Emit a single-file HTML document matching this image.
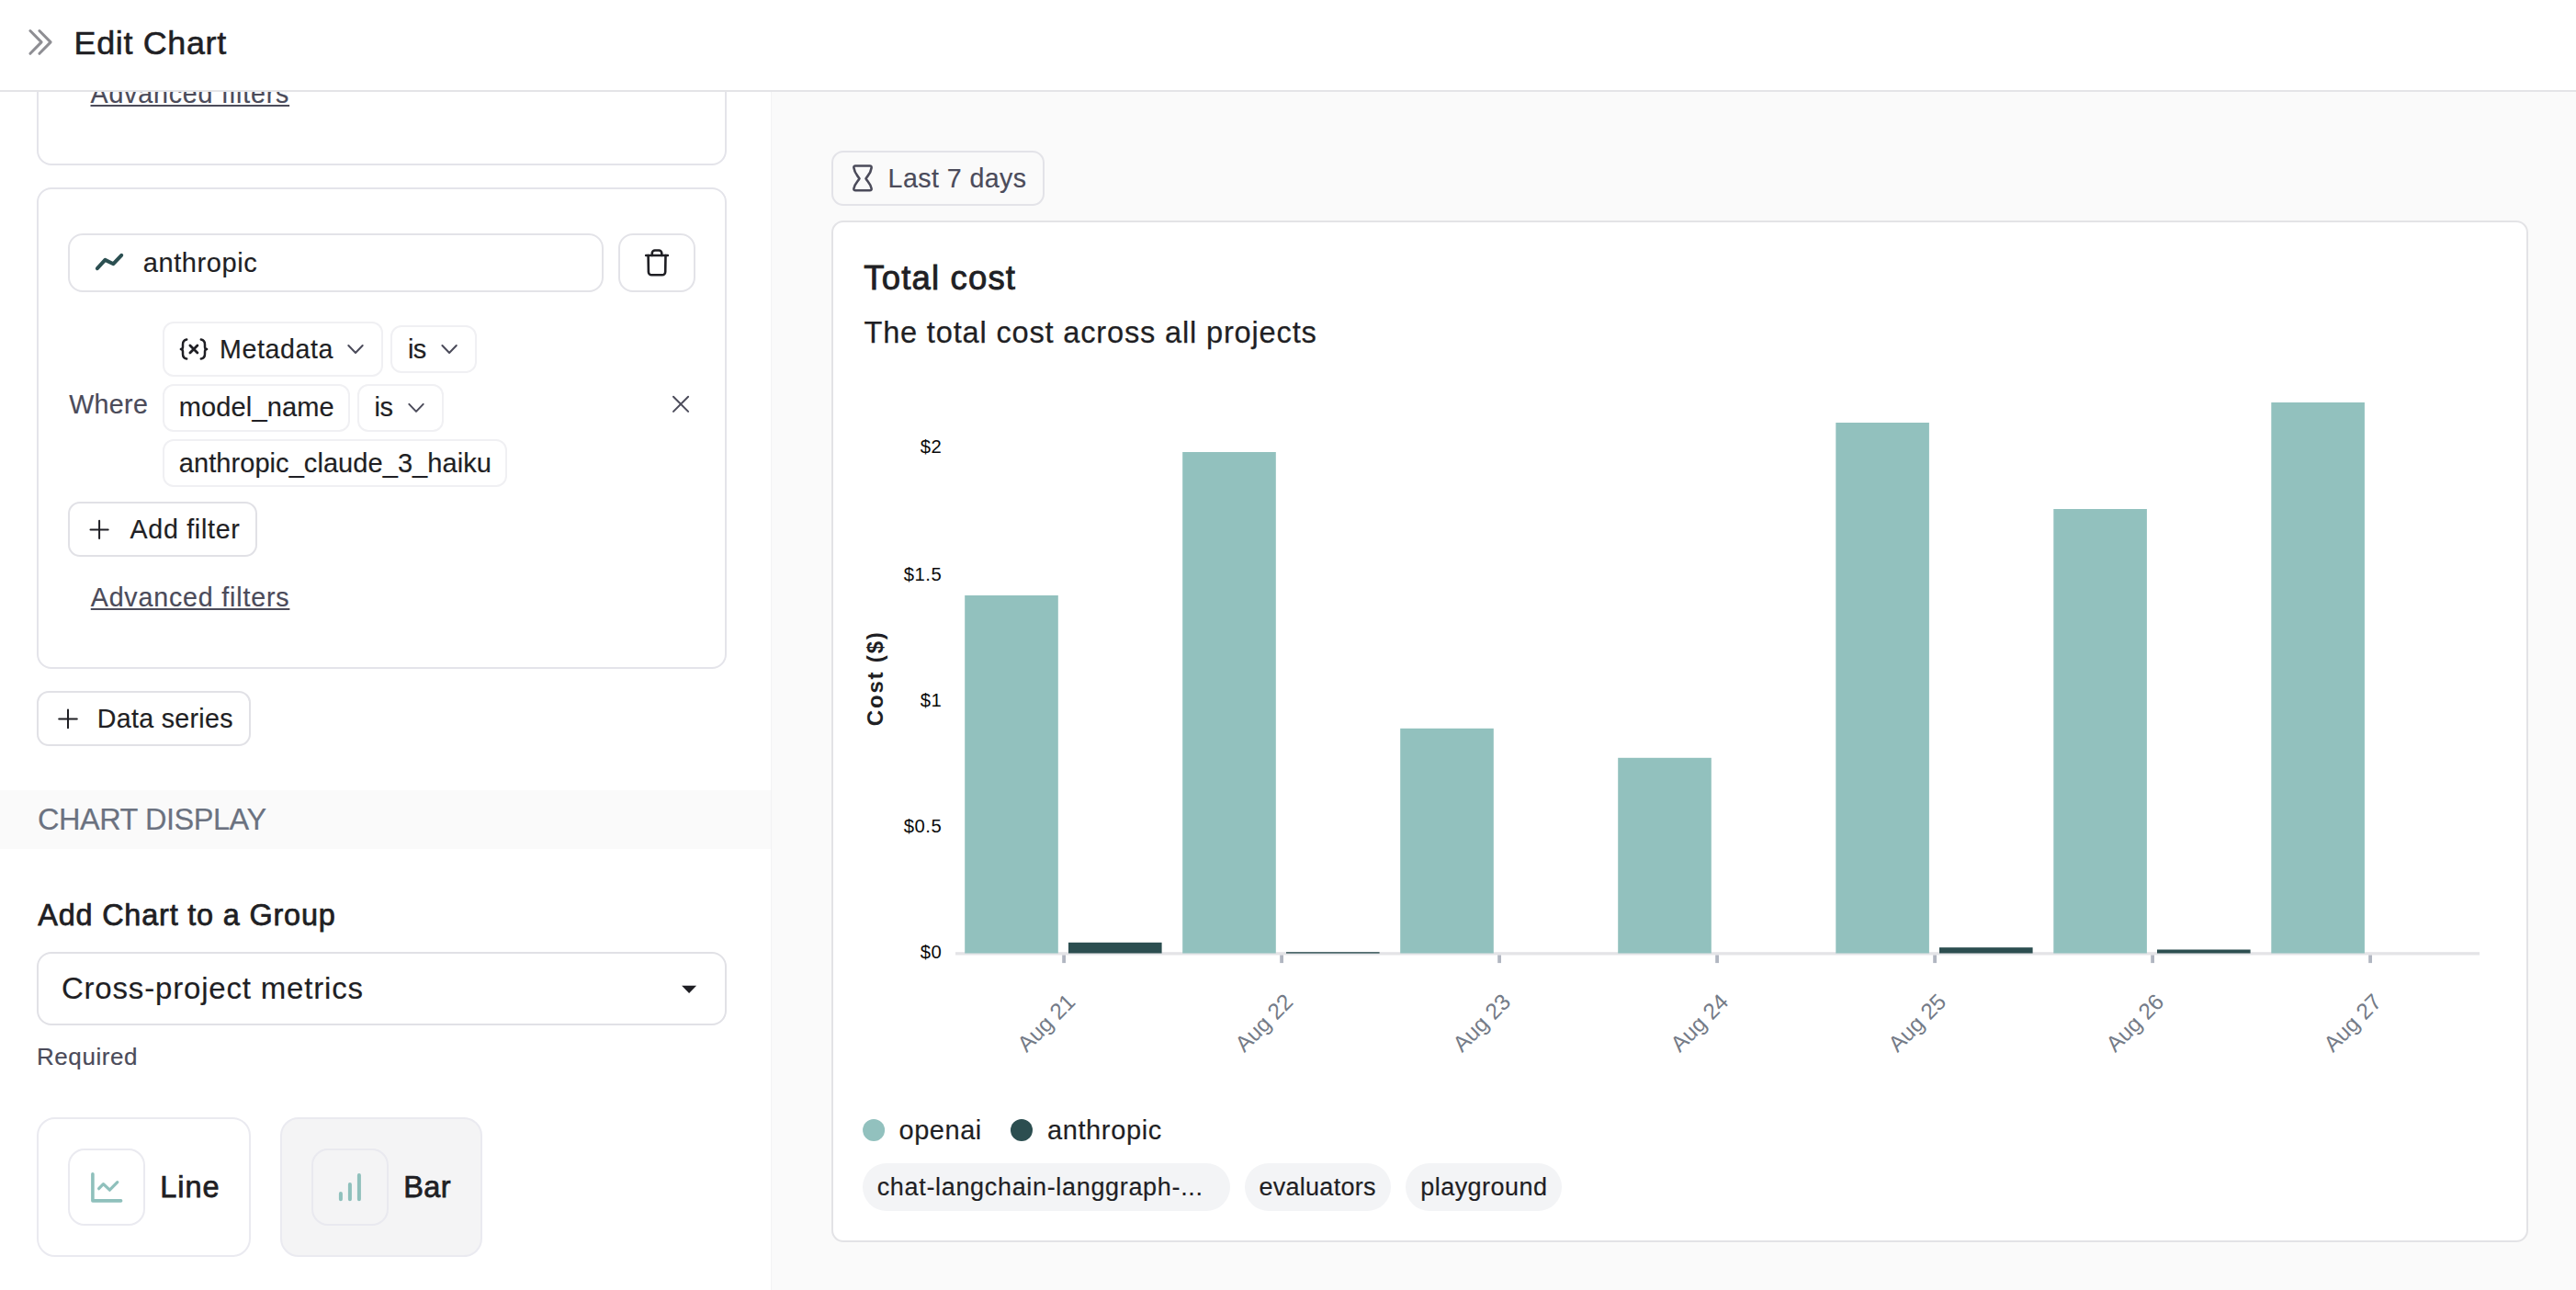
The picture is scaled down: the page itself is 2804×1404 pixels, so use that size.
<!DOCTYPE html>
<html lang="en">
<head>
<meta charset="utf-8">
<title>Edit Chart</title>
<style>
  html, body { margin: 0; padding: 0; }
  body { width: 2804px; height: 1404px; position: relative; overflow: hidden; background: #ffffff;
         font-family: "Liberation Sans", Arial, Helvetica, sans-serif; color: #1f1f24; }
  * { box-sizing: border-box; }
  .abs { position: absolute; }
  .tx { position: absolute; white-space: nowrap; line-height: 1; display: block; }
  .bm { display: inline-block; width: 0; height: 0; }
  header { position: absolute; left: 0; top: 0; width: 2804px; height: 100px; background: #fff;
           border-bottom: 2px solid #e4e4e7; z-index: 10; }
  #left { position: absolute; left: 0; top: 0; width: 839px; height: 1404px; background: #fff; overflow: hidden; }
  #right { position: absolute; left: 839px; top: 0; width: 1965px; height: 1404px; background: #fafafa;
           border-left: 1px solid #f3f3f4; }
  #rightc { position: absolute; left: 0; top: 0; width: 2804px; height: 1404px; }
  .card { position: absolute; border: 2px solid #e4e4ea; border-radius: 16px; background: #fff; }
  .field { position: absolute; border: 2px solid #e3e3e8; border-radius: 16px; background: #fff; }
  .sel { position: absolute; border: 2px solid #f0f0f3; border-radius: 12px; background: #fff; }
  .btn { position: absolute; border: 2px solid #e1e1e6; border-radius: 13px; background: #fff; }
  .chip { position: absolute; top: 1266px; height: 52px; border-radius: 26px; background: #f3f4f6; }
  button { font: inherit; color: inherit; padding: 0; margin: 0; text-align: left; }
  svg { position: absolute; overflow: visible; }
</style>
</head>
<body>

<!-- ================= LEFT PANEL ================= -->
<aside id="left">
  <!-- previous series card (scrolled, clipped by header) -->
  <section class="card" style="left:40px;top:-60px;width:751px;height:240px;"><span class="tx" id="t_adv1" style="left:56.50px;top:146.00px;font-size:28.6px;font-weight:400;color:#4b4b5a;letter-spacing:0.824px;text-decoration:underline;text-decoration-thickness:2px;text-underline-offset:1.5px;-webkit-text-stroke:0.18px #4b4b5a;">Advanced filters</span></section>

  <!-- anthropic series card -->
  <section class="card" style="left:40px;top:204px;width:751px;height:524px;"></section>
  <div class="field" style="left:74px;top:254px;width:583px;height:64px;"><span class="tx" id="t_anth" style="left:79.80px;top:15.81px;font-size:29px;font-weight:400;color:#1f1f24;letter-spacing:0.581px;-webkit-text-stroke:0.18px #1f1f24;">anthropic</span></div>
  <button class="field" style="left:673px;top:254px;width:84px;height:64px;padding:0;"></button>

  <div class="sel" style="left:177px;top:350px;width:240px;height:60px;"><span class="tx" id="t_meta" style="left:60.00px;top:13.50px;font-size:28.6px;font-weight:400;color:#1f1f24;letter-spacing:0.598px;-webkit-text-stroke:0.18px #1f1f24;">Metadata</span></div>
  <div class="sel" style="left:425px;top:354px;width:94px;height:52px;"><span class="tx" id="t_is1" style="left:17.00px;top:9.51px;font-size:29px;font-weight:400;color:#1f1f24;letter-spacing:-0.693px;-webkit-text-stroke:0.18px #1f1f24;">is</span></div>
  <div class="sel" style="left:177px;top:418px;width:204px;height:52px;"><span class="tx" id="t_model" style="left:15.75px;top:9.31px;font-size:29px;font-weight:400;color:#1f1f24;letter-spacing:0.136px;-webkit-text-stroke:0.18px #1f1f24;">model_name</span></div>
  <div class="sel" style="left:389px;top:418px;width:94px;height:52px;"><span class="tx" id="t_is2" style="left:16.50px;top:9.31px;font-size:29px;font-weight:400;color:#1f1f24;letter-spacing:-0.443px;-webkit-text-stroke:0.18px #1f1f24;">is</span></div>
  <div class="sel" style="left:177px;top:478px;width:375px;height:52px;"><span class="tx" id="t_haiku" style="left:15.75px;top:9.61px;font-size:29px;font-weight:400;color:#1f1f24;letter-spacing:0.067px;-webkit-text-stroke:0.18px #1f1f24;">anthropic_claude_3_haiku</span></div>

  <button class="btn" style="left:74px;top:546px;width:206px;height:60px;"><span class="tx" id="t_addf" style="left:65.50px;top:13.81px;font-size:28.6px;font-weight:400;color:#1f1f24;letter-spacing:0.715px;-webkit-text-stroke:0.18px #1f1f24;">Add filter</span></button>
  <button class="btn" style="left:40px;top:752px;width:233px;height:60px;"><span class="tx" id="t_data" style="left:63.71px;top:14.00px;font-size:28.6px;font-weight:400;color:#1f1f24;letter-spacing:0.323px;-webkit-text-stroke:0.18px #1f1f24;">Data series</span></button>

  <!-- section band -->
  <h3 class="abs" style="left:0;top:860px;width:839px;height:64px;background:#fafafa;margin:0;font-weight:400;"><span class="tx" id="t_cd" style="left:40.91px;top:15.91px;font-size:32.5px;font-weight:400;color:#6b7280;letter-spacing:-0.456px;-webkit-text-stroke:0.18px #6b7280;">CHART DISPLAY</span></h3>

  <!-- group select -->
  <div class="field" style="left:40px;top:1036px;width:751px;height:80px;border-color:#e1e1e6;"><span class="tx" id="t_cross" style="left:24.91px;top:20.91px;font-size:33px;font-weight:400;color:#1f1f24;letter-spacing:0.819px;-webkit-text-stroke:0.18px #1f1f24;">Cross-project metrics</span></div>

  <!-- chart type cards -->
  <div class="card" style="left:40px;top:1216px;width:233px;height:152px;border-radius:20px;border-color:#eaeaf0;"><span class="tx" id="t_line" style="left:132.21px;top:58.00px;font-size:32.5px;font-weight:400;color:#1f1f24;letter-spacing:0.977px;-webkit-text-stroke:0.75px #1f1f24;">Line</span></div>
  <div class="card" style="left:74px;top:1250px;width:84px;height:84px;border-radius:18px;border-color:#eaeaf0;"></div>
  <div class="card" style="left:305px;top:1216px;width:220px;height:152px;border-radius:20px;border-color:#eaeaf0;background:#f4f4f5;"><span class="tx" id="t_bar" style="left:132.21px;top:58.00px;font-size:32.5px;font-weight:400;color:#1f1f24;letter-spacing:0.399px;-webkit-text-stroke:0.75px #1f1f24;">Bar</span></div>
  <div class="card" style="left:339px;top:1250px;width:84px;height:84px;border-radius:18px;border-color:#e9e9ef;background:#f4f4f5;"></div>

  <!-- icons (page coordinates) -->
  <svg width="839" height="1404" viewBox="0 0 839 1404" style="left:0;top:0;" fill="none" stroke-linecap="round" stroke-linejoin="round">
    <!-- trend icon -->
    <path d="M105.9 292.2 L114.4 282.9 L123.4 287.2 L132.2 277.8" stroke="#2b4f51" stroke-width="4"/>
    <!-- trash -->
    <g stroke="#1f1f24" stroke-width="2.6">
      <path d="M703.2 278 H726.9"/>
      <path d="M709.8 278 V275.6 a3.1 3.1 0 0 1 3.1 -3.1 h4.3 a3.1 3.1 0 0 1 3.1 3.1 V278"/>
      <path d="M705.6 278 L705.9 296 a3.3 3.3 0 0 0 3.3 3.3 h11.7 a3.3 3.3 0 0 0 3.3 -3.3 L724.5 278"/>
    </g>
    <!-- {x} variable icon -->
    <g stroke="#1f1f24" stroke-width="2.5">
      <path d="M203.2 369.6 C200.2 370.2 199 372 199 375 V377.4 C199 379 198.4 380 196.9 380.1 C198.4 380.2 199 381.2 199 382.8 V385.2 C199 388.2 200.2 390 203.2 390.6"/>
      <path d="M218.8 369.6 C221.8 370.2 223 372 223 375 V377.4 C223 379 223.6 380 225.1 380.1 C223.6 380.2 223 381.2 223 382.8 V385.2 C223 388.2 221.8 390 218.8 390.6"/>
      <path d="M206.9 376 L214.9 384 M214.9 376 L206.9 384" stroke-width="2.8"/>
    </g>
    <!-- chevrons -->
    <g stroke="#4b4b5a" stroke-width="2">
      <path d="M379.3 376 L387 384 L394.7 376"/>
      <path d="M481.4 376 L489.1 384 L496.8 376"/>
      <path d="M445.3 439.9 L453 447.9 L460.7 439.9"/>
      <!-- remove X -->
      <path d="M733 431.8 L749.1 447.9 M749.1 431.8 L733 447.9"/>
    </g>
    <!-- plus icons -->
    <g stroke="#1f1f24" stroke-width="2">
      <path d="M98.5 576.4 H117.7 M108.1 566.8 V586"/>
      <path d="M64.2 782.4 H83.8 M74 772.6 V792.2"/>
    </g>
    <!-- select caret -->
    <path d="M742.1 1072.8 H758.1 L750.1 1081 Z" fill="#1f1f24" stroke="none"/>
    <!-- line icon -->
    <g stroke="#8fc0bc">
      <path d="M100.9 1277.8 V1306.9 H131.6" stroke-width="3.6"/>
      <path d="M107.6 1293.7 L112.5 1288.6 L119.4 1295.2 L127.8 1286.6" stroke-width="3.2"/>
    </g>
    <!-- bar icon -->
    <g stroke="#8fc0bc" stroke-width="4">
      <path d="M370.9 1298.9 V1305.2 M380.9 1288.9 V1305.2 M390.9 1278.9 V1305.2"/>
    </g>
  </svg>

<span class="tx" id="t_where" style="left:75.21px;top:425.50px;font-size:28.6px;font-weight:400;color:#4b4b5a;letter-spacing:0.371px;-webkit-text-stroke:0.18px #4b4b5a;">Where</span>
<span class="tx" id="t_adv2" style="left:98.75px;top:636.00px;font-size:28.6px;font-weight:400;color:#4b4b5a;letter-spacing:0.824px;text-decoration:underline;text-decoration-thickness:2px;text-underline-offset:1.5px;-webkit-text-stroke:0.18px #4b4b5a;">Advanced filters</span>
<span class="tx" id="t_group" style="left:41.21px;top:979.90px;font-size:32.4px;font-weight:400;color:#1f1f24;letter-spacing:0.825px;-webkit-text-stroke:0.75px #1f1f24;">Add Chart to a Group</span>
<span class="tx" id="t_req" style="left:39.91px;top:1137.01px;font-size:26px;font-weight:400;color:#4b4b5a;letter-spacing:0.593px;-webkit-text-stroke:0.18px #4b4b5a;">Required</span>
</aside>

<!-- ================= RIGHT PANEL ================= -->
<main id="right"></main>
<div id="rightc">
  <button class="btn" style="left:905px;top:164px;width:231.5px;height:60px;background:#fafafa;border-color:#e3e3e8;"><span class="tx" id="t_last" style="left:59.61px;top:13.75px;font-size:28.6px;font-weight:400;color:#4b4b5a;letter-spacing:0.421px;-webkit-text-stroke:0.18px #4b4b5a;">Last 7 days</span></button>
  <section class="card" style="left:905px;top:240px;width:1847px;height:1112px;border-radius:13px;border-color:#e3e3e6;"></section>

  <div class="chip" style="left:939px;width:400px;"><span class="tx" id="t_chip1" style="left:15.71px;top:12.91px;font-size:27px;font-weight:400;color:#1f1f24;letter-spacing:0.670px;-webkit-text-stroke:0.18px #1f1f24;">chat-langchain-langgraph-...</span></div>
  <div class="chip" style="left:1355px;width:159px;"><span class="tx" id="t_chip2" style="left:15.41px;top:12.91px;font-size:27px;font-weight:400;color:#1f1f24;letter-spacing:0.281px;-webkit-text-stroke:0.18px #1f1f24;">evaluators</span></div>
  <div class="chip" style="left:1530px;width:170px;"><span class="tx" id="t_chip3" style="left:16.21px;top:12.91px;font-size:27px;font-weight:400;color:#1f1f24;letter-spacing:0.468px;-webkit-text-stroke:0.18px #1f1f24;">playground</span></div>

  <svg width="2804" height="1404" viewBox="0 0 2804 1404" style="left:0;top:0;" font-family='"Liberation Sans", Arial, Helvetica, sans-serif'>
    <!-- hourglass -->
    <path d="M931.2 180.5 H946.8 Q948.9 180.5 948.6 182.7 C947.9 188.6 944.6 190.9 942.5 194.4 C944.6 197.9 947.9 200.3 948.6 205.1 Q948.9 207.3 946.8 207.3 H931.2 Q929.1 207.3 929.4 205.1 C930.1 200.3 933.4 197.9 935.5 194.4 C933.4 190.9 930.1 188.6 929.4 182.7 Q929.1 180.5 931.2 180.5 Z"
          fill="none" stroke="#4b4b5a" stroke-width="2.6" stroke-linejoin="round"/>
    <!-- axis -->
    <rect x="1040" y="1036.2" width="1659" height="3.3" fill="#e4e4e7"/>
    <!-- bars -->
    <g fill="#92c1be">
      <rect x="1050.2" y="648" width="101.6" height="389.5"/>
      <rect x="1287.2" y="492" width="101.6" height="545.5"/>
      <rect x="1524.2" y="792.8" width="101.6" height="244.7"/>
      <rect x="1761.2" y="824.8" width="101.6" height="212.7"/>
      <rect x="1998.3" y="460" width="101.6" height="577.5"/>
      <rect x="2235.3" y="554" width="101.6" height="483.5"/>
      <rect x="2472.3" y="438" width="101.6" height="599.5"/>
    </g>
    <g fill="#2c4e50">
      <rect x="1163" y="1025.8" width="101.6" height="11.7"/>
      <rect x="1400" y="1036.2" width="101.6" height="1.4"/>
      <rect x="2111" y="1031.2" width="101.6" height="6.3"/>
      <rect x="2348" y="1033.5" width="101.6" height="4"/>
    </g>
    <g fill="#b1b6c1">
      <rect x="1156.2" y="1039.5" width="3.8" height="8.6"/>
      <rect x="1393.2" y="1039.5" width="3.8" height="8.6"/>
      <rect x="1630.2" y="1039.5" width="3.8" height="8.6"/>
      <rect x="1867.2" y="1039.5" width="3.8" height="8.6"/>
      <rect x="2104.2" y="1039.5" width="3.8" height="8.6"/>
      <rect x="2341.2" y="1039.5" width="3.8" height="8.6"/>
      <rect x="2578.2" y="1039.5" width="3.8" height="8.6"/>
    </g>
    <!-- x labels -->
    <g font-size="24.3" fill="#747b87" text-anchor="end">
      <text transform="translate(1171.9 1091.9) rotate(-45)">Aug 21</text>
      <text transform="translate(1408.9 1091.9) rotate(-45)">Aug 22</text>
      <text transform="translate(1645.9 1091.9) rotate(-45)">Aug 23</text>
      <text transform="translate(1882.9 1091.9) rotate(-45)">Aug 24</text>
      <text transform="translate(2119.9 1091.9) rotate(-45)">Aug 25</text>
      <text transform="translate(2356.9 1091.9) rotate(-45)">Aug 26</text>
      <text transform="translate(2593.9 1091.9) rotate(-45)">Aug 27</text>
    </g>
    <!-- y title -->
    <text transform="translate(961.4 739.2) rotate(-90)" text-anchor="middle" font-size="24" font-weight="700" fill="#1f1f24" textLength="102" lengthAdjust="spacing">Cost ($)</text>
    <!-- legend dots -->
    <circle cx="951.1" cy="1230" r="12" fill="#92c1be"/>
    <circle cx="1112" cy="1230" r="12" fill="#2c4e50"/>
  </svg>

<span class="tx" id="t_total" style="left:940.30px;top:285.01px;font-size:36.5px;font-weight:400;color:#1f1f24;letter-spacing:1.162px;-webkit-text-stroke:0.9px #1f1f24;">Total cost</span>
<span class="tx" id="t_desc" style="left:940.41px;top:345.76px;font-size:32.6px;font-weight:400;color:#1f1f24;letter-spacing:0.820px;-webkit-text-stroke:0.25px #1f1f24;">The total cost across all projects</span>
<span class="tx" id="t_openai" style="left:978.61px;top:1215.61px;font-size:29px;font-weight:400;color:#1f1f24;letter-spacing:0.502px;-webkit-text-stroke:0.18px #1f1f24;">openai</span>
<span class="tx" id="t_anth2" style="left:1139.91px;top:1215.61px;font-size:29px;font-weight:400;color:#1f1f24;letter-spacing:0.631px;-webkit-text-stroke:0.18px #1f1f24;">anthropic</span>
<span class="tx" id="t_y0" style="left:1001.67px;top:476.42px;font-size:20.3px;font-weight:400;color:#0a0a0a;letter-spacing:0.450px;">$2</span>
<span class="tx" id="t_y1" style="left:983.86px;top:614.71px;font-size:20.3px;font-weight:400;color:#0a0a0a;letter-spacing:0.450px;">$1.5</span>
<span class="tx" id="t_y2" style="left:1001.67px;top:752.21px;font-size:20.3px;font-weight:400;color:#0a0a0a;letter-spacing:0.450px;">$1</span>
<span class="tx" id="t_y3" style="left:983.86px;top:889.10px;font-size:20.3px;font-weight:400;color:#0a0a0a;letter-spacing:0.450px;">$0.5</span>
<span class="tx" id="t_y4" style="left:1001.67px;top:1026.31px;font-size:20.3px;font-weight:400;color:#0a0a0a;letter-spacing:0.450px;">$0</span>
</div>

<!-- ================= HEADER ================= -->
<header>
  <svg width="100" height="98" viewBox="0 0 100 98" style="left:0;top:0;" fill="none" stroke="#8e8e93" stroke-width="3" stroke-linecap="round" stroke-linejoin="round">
    <path d="M32.9 33.5 L45.1 45.9 L32.9 58.3"/>
    <path d="M42.9 33.5 L55.1 45.9 L42.9 58.3"/>
  </svg>
<span class="tx" id="t_title" style="left:80.61px;top:30.00px;font-size:35.9px;font-weight:400;color:#1f1f24;letter-spacing:0.666px;-webkit-text-stroke:0.6px #1f1f24;">Edit Chart</span>
</header>

</body>
</html>
